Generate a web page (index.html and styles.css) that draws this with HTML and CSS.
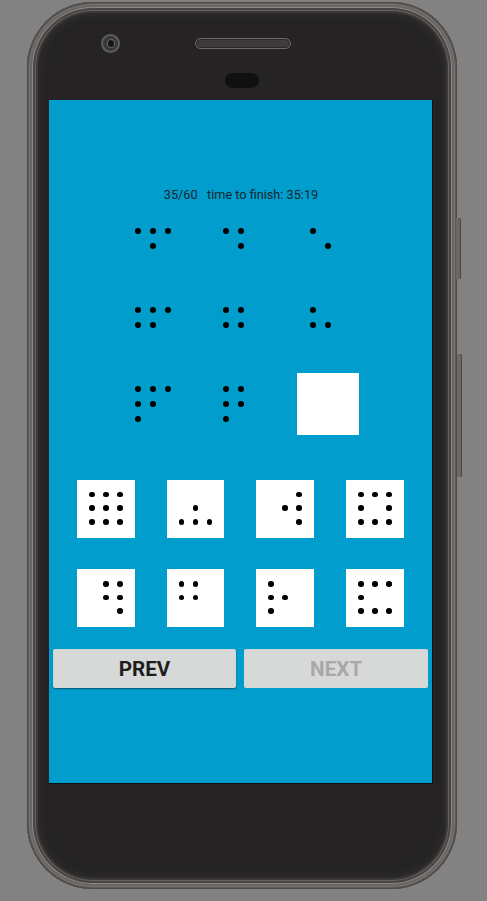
FILE: index.html
```html
<!DOCTYPE html>
<html>
<head>
<meta charset="utf-8">
<link rel="stylesheet" href="styles.css">
</head>
<body>
<div class="phone">
  <span class="side-btn power"></span>
  <span class="side-btn volume"></span>
  <div class="bezel-top">
    <div class="bezel-row">
      <span class="camera"><span class="lens"></span></span>
      <span class="speaker"></span>
    </div>
    <span class="sensor"></span>
  </div>
  <div class="screen">
    <div class="status">35/60   time to finish: 35:19</div>
    <div class="matrix">
      <div class="cell"><i></i><i></i><i></i><i class="o"></i><i></i><i class="o"></i><i class="o"></i><i class="o"></i><i class="o"></i></div>
      <div class="cell"><i></i><i></i><i class="o"></i><i class="o"></i><i></i><i class="o"></i><i class="o"></i><i class="o"></i><i class="o"></i></div>
      <div class="cell"><i></i><i class="o"></i><i class="o"></i><i class="o"></i><i></i><i class="o"></i><i class="o"></i><i class="o"></i><i class="o"></i></div>

      <div class="cell"><i></i><i></i><i></i><i></i><i></i><i class="o"></i><i class="o"></i><i class="o"></i><i class="o"></i></div>
      <div class="cell"><i></i><i></i><i class="o"></i><i></i><i></i><i class="o"></i><i class="o"></i><i class="o"></i><i class="o"></i></div>
      <div class="cell"><i></i><i class="o"></i><i class="o"></i><i></i><i></i><i class="o"></i><i class="o"></i><i class="o"></i><i class="o"></i></div>

      <div class="cell"><i></i><i></i><i></i><i></i><i></i><i class="o"></i><i></i><i class="o"></i><i class="o"></i></div>
      <div class="cell"><i></i><i></i><i class="o"></i><i></i><i></i><i class="o"></i><i></i><i class="o"></i><i class="o"></i></div>
      <div class="cell blank"></div>
    </div>
    <div class="options">
      <div class="opt"><i></i><i></i><i></i><i></i><i></i><i></i><i></i><i></i><i></i></div>
      <div class="opt"><i class="o"></i><i class="o"></i><i class="o"></i><i class="o"></i><i></i><i class="o"></i><i></i><i></i><i></i></div>
      <div class="opt"><i class="o"></i><i class="o"></i><i></i><i class="o"></i><i></i><i></i><i class="o"></i><i class="o"></i><i></i></div>
      <div class="opt"><i></i><i></i><i></i><i></i><i class="o"></i><i></i><i></i><i></i><i></i></div>

      <div class="opt"><i class="o"></i><i></i><i></i><i class="o"></i><i></i><i></i><i class="o"></i><i class="o"></i><i></i></div>
      <div class="opt"><i></i><i></i><i class="o"></i><i></i><i></i><i class="o"></i><i class="o"></i><i class="o"></i><i class="o"></i></div>
      <div class="opt"><i></i><i class="o"></i><i class="o"></i><i></i><i></i><i class="o"></i><i></i><i class="o"></i><i class="o"></i></div>
      <div class="opt"><i></i><i></i><i></i><i></i><i class="o"></i><i class="o"></i><i></i><i></i><i></i></div>
    </div>
    <div class="buttons">
      <button class="btn prev">PREV</button>
      <button class="btn next" disabled>NEXT</button>
    </div>
  </div>
</div>
</body>
</html>
```

FILE: styles.css
```css
html, body {
  margin: 0;
  padding: 0;
}
body {
  background: #828282;
  width: 487px;
  height: 901px;
  overflow: hidden;
  font-family: Roboto, "Liberation Sans", sans-serif;
}
.phone {
  position: relative;
  box-sizing: border-box;
  margin: 2px 0 0 27px;
  width: 430px;
  height: 887px;
  border-radius: 66px;
  padding: 0 0 0 22px;
  background: #252324;
  box-shadow:
    inset 0 0 0 1px #4e4a48,
    inset 0 0 0 2px #5e5a58,
    inset 0 0 0 3px #77736f,
    inset 0 0 0 5px #6a6663,
    inset 0 0 0 6px #8c8885,
    inset 0 0 0 8px #484443,
    inset 0 0 0 9px #666260,
    inset 0 0 0 11px #3a3737,
    inset 0 0 6px 14px #2e2c2c;
}
.side-btn {
  position: absolute;
  background: #6c6866;
  border-radius: 0 2px 2px 0;
  box-shadow: inset -1px 0 0 #4a4645;
}
.side-btn.power {
  left: 429px;
  top: 216px;
  width: 5px;
  height: 61px;
}
.side-btn.volume {
  left: 430px;
  top: 352px;
  width: 5px;
  height: 123px;
}
.bezel-top {
  box-sizing: border-box;
  height: 98px;
  padding-top: 32px;
  display: flex;
  flex-direction: column;
}
.bezel-row {
  display: flex;
  align-items: center;
  height: 18px;
  padding-left: 52px;
}
.camera {
  box-sizing: border-box;
  width: 19px;
  height: 19px;
  border-radius: 50%;
  background: #3a3839;
  border: 2px solid #5e5c5c;
  display: flex;
  align-items: center;
  justify-content: center;
}
.lens {
  width: 6px;
  height: 7px;
  border-radius: 50%;
  background: #151415;
  box-shadow: 0 0 0 1px #6a6868;
}
.speaker {
  box-sizing: border-box;
  margin-left: 75px;
  width: 96px;
  height: 11px;
  border-radius: 6px;
  background: #3d3b3b;
  border: 1px solid #6d6a69;
  box-shadow: inset 0 0 0 1px #2a2828;
}
.sensor {
  align-self: flex-start;
  margin: 21px 0 0 176px;
  width: 34px;
  height: 15px;
  border-radius: 8px;
  background: #111011;
}
.screen {
  box-sizing: border-box;
  width: 384px;
  height: 684px;
  background: #009dcd;
  border-right: 1px solid #101010;
  border-bottom: 1px solid #101010;
  padding-top: 87px;
  display: flex;
  flex-direction: column;
}
.status {
  white-space: pre;
  text-align: center;
  font-size: 12.7px;
  line-height: 15px;
  color: #17262e;
  padding-left: 1px;
}
.matrix {
  margin: 13px 0 0 73px;
  display: grid;
  grid-template-columns: repeat(3, 62px);
  grid-auto-rows: 62px;
  column-gap: 25.5px;
  row-gap: 17px;
}
.cell {
  box-sizing: border-box;
  padding: 8.5px 0 0 8.5px;
  display: grid;
  grid-template-columns: repeat(3, 15px);
  grid-template-rows: repeat(3, 15px);
  align-content: start;
}
.cell i, .opt i {
  display: block;
  margin: auto;
  border-radius: 50%;
  background: #000;
}
.cell i {
  width: 6px;
  height: 6px;
}
.cell i.o, .opt i.o {
  visibility: hidden;
}
.cell.blank {
  background: #fff;
  margin-left: -0.5px;
}
.options {
  margin: 45px 0 0 28.3px;
  display: grid;
  grid-template-columns: repeat(4, 57.5px);
  grid-auto-rows: 57.5px;
  column-gap: 32.1px;
  row-gap: 31.8px;
}
.opt {
  box-sizing: border-box;
  background: #fff;
  padding: 7.75px 0 0 7.75px;
  display: grid;
  grid-template-columns: repeat(3, 14px);
  grid-template-rows: repeat(3, 13.6px);
  align-content: start;
}
.opt i {
  width: 5.6px;
  height: 5.6px;
}
.buttons {
  margin-top: 22.5px;
  display: flex;
  gap: 8px;
  padding: 0 4px 0 3.7px;
}
.btn {
  flex: 1;
  height: 38.5px;
  border: none;
  border-radius: 2px;
  background: #d7d8d8;
  font-family: Roboto, "Liberation Sans", sans-serif;
  font-weight: bold;
  font-size: 20.7px;
  padding: 0;
  margin: 0;
}
.btn.prev {
  color: #1e1e1e;
  box-shadow: 0 1px 1.5px rgba(0, 0, 0, 0.45);
}
.btn.next {
  color: #a8a8a8;
}
```
